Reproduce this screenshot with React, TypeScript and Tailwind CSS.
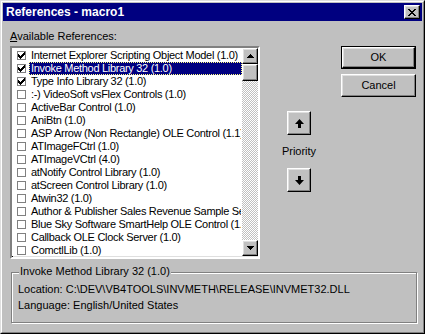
const items: { name: string; checked?: boolean; selected?: boolean }[] = [
  { name: "Internet Explorer Scripting Object Model (1.0)", checked: true },
  { name: "Invoke Method Library 32 (1.0)", checked: true, selected: true },
  { name: "Type Info Library 32 (1.0)", checked: true },
  { name: ":-) VideoSoft vsFlex Controls (1.0)" },
  { name: "ActiveBar Control (1.0)" },
  { name: "AniBtn (1.0)" },
  { name: "ASP Arrow (Non Rectangle) OLE Control (1.1)" },
  { name: "ATImageFCtrl (1.0)" },
  { name: "ATImageVCtrl (4.0)" },
  { name: "atNotify Control Library (1.0)" },
  { name: "atScreen Control Library (1.0)" },
  { name: "Atwin32 (1.0)" },
  { name: "Author & Publisher Sales Revenue Sample Server (1.0)" },
  { name: "Blue Sky Software SmartHelp OLE Control (1.0)" },
  { name: "Callback OLE Clock Server (1.0)" },
  { name: "ComctlLib (1.0)" },
];

const raised =
  "border border-t-white border-l-white border-r-black border-b-black shadow-[inset_-1px_-1px_0_#808080,inset_1px_1px_0_#dfdfdf]";

function CheckBox({ checked }: { checked?: boolean }) {
  return (
    <div className="ml-[4px] w-[9px] h-[9px] shrink-0 border border-[#808080] bg-white flex items-center justify-center">
      {checked && (
        <svg width="7" height="7" viewBox="0 0 7 7" shapeRendering="crispEdges">
          <path
            d="M6 0h1v1H6zM5 1h2v1H5zM0 2h1v1H0zM4 2h3v1H4zM0 3h2v1H0zM3 3h3v1H3zM0 4h5v1H0zM1 5h3v1H1zM2 6h1v1H2z"
            fill="#000"
          />
        </svg>
      )}
    </div>
  );
}

function ScrollArrow({ down }: { down?: boolean }) {
  return (
    <div className={`w-[16px] h-[16px] bg-[#c0c0c0] flex items-center justify-center ${raised}`}>
      <svg width="7" height="4" viewBox="0 0 7 4" shapeRendering="crispEdges">
        <path
          d={down ? "M0 0h7v1H0zM1 1h5v1H1zM2 2h3v1H2zM3 3h1v1H3z" : "M3 0h1v1H3zM2 1h3v1H2zM1 2h5v1H1zM0 3h7v1H0z"}
          fill="#000"
        />
      </svg>
    </div>
  );
}

function PriorityButton({ down }: { down?: boolean }) {
  return (
    <div className={`w-[24px] h-[24px] bg-[#c0c0c0] flex items-center justify-center ${raised}`}>
      <svg width="9" height="9" viewBox="0 0 9 9">
        <polygon
          points={down ? "4.5,9 0,4 3,4 3,0 6,0 6,4 9,4" : "4.5,0 9,5 6,5 6,9 3,9 3,5 0,5"}
          fill="#000"
        />
      </svg>
    </div>
  );
}

export default function App() {
  return (
    <div className="w-[425px] h-[334px] bg-[#c0c0c0] border border-t-[#dfdfdf] border-l-[#dfdfdf] border-r-black border-b-black font-['Liberation_Sans',Arial,sans-serif] text-[11px] text-black">
      <div className="h-full border border-t-white border-l-white border-r-[#808080] border-b-[#808080] p-[1px]">
        {/* title bar */}
        <div className="h-[18px] bg-[#000080] flex items-center justify-between pl-[3px] pr-[2px]">
          <span className="text-white font-bold text-[12px] leading-none">References - macro1</span>
          <div className={`w-[16px] h-[14px] bg-[#c0c0c0] flex items-center justify-center ${raised}`}>
            <svg width="8" height="7" viewBox="0 0 8 7" shapeRendering="crispEdges">
              <path
                d="M0 0h2v1H0zM6 0h2v1H6zM1 1h2v1H1zM5 1h2v1H5zM2 2h4v1H2zM3 3h2v1H3zM2 4h4v1H2zM1 5h2v1H1zM5 5h2v1H5zM0 6h2v1H0zM6 6h2v1H6z"
                fill="#000"
              />
            </svg>
          </div>
        </div>

        <div className="flex items-start pl-[7px]">
          {/* list column */}
          <div className="w-[250px]">
            <div className="mt-[9px] h-[13px] leading-[13px]">
              <span className="underline">A</span>vailable References:
            </div>
            <div className="mt-[3px] h-[213px] flex border-2 border-t-[#808080] border-l-[#808080] border-r-white border-b-white shadow-[inset_1px_1px_0_#000,inset_-1px_-1px_0_#dfdfdf] p-[1px]">
              <div className="flex-1 bg-white overflow-hidden -mt-[1px] -ml-[1px] pt-[1px] pl-[1px]">
                {items.map((it) => (
                  <div key={it.name} className="h-[13px] flex items-center">
                    <CheckBox checked={it.checked} />
                    <div
                      className={`ml-[3px] flex-1 h-[13px] leading-[11px] whitespace-nowrap overflow-hidden tracking-[-0.3px] pl-[1px] border border-dotted ${
                        it.selected ? "bg-[#000080] text-white border-[#ffff80]" : "border-transparent"
                      }`}
                    >
                      {it.name}
                    </div>
                  </div>
                ))}
              </div>
              <div className="w-[16px] -mt-[1px] -mr-[1px] flex flex-col bg-[repeating-conic-gradient(#c0c0c0_0_25%,#ffffff_0_50%)] bg-[length:2px_2px]">
                <ScrollArrow />
                <div className={`w-[16px] h-[17px] bg-[#c0c0c0] ${raised}`} />
                <div className="flex-1" />
                <ScrollArrow down />
              </div>
            </div>
          </div>

          {/* priority column */}
          <div className="ml-[19px] w-[40px] flex flex-col items-center">
            <div className="mt-[90px]">
              <PriorityButton />
            </div>
            <div className="mt-[10px] h-[13px] leading-[13px]">Priority</div>
            <div className="mt-[10px]">
              <PriorityButton down />
            </div>
          </div>

          {/* buttons column */}
          <div className="ml-[22px] w-[75px] flex flex-col">
            <div className="mt-[25px] h-[23px] border border-black">
              <div className={`h-full flex items-center justify-center bg-[#c0c0c0] ${raised}`}>OK</div>
            </div>
            <div className={`mt-[5px] h-[23px] flex items-center justify-center bg-[#c0c0c0] ${raised}`}>Cancel</div>
          </div>
        </div>

        {/* group box */}
        <div className="relative ml-[8px] mt-[13px] w-[406px] h-[51px] border border-[#808080] shadow-[inset_1px_1px_0_#fff,1px_1px_0_#fff] pl-[6px] pt-[8px]">
          <div className="absolute left-[7px] -top-[8px] px-[1px] bg-[#c0c0c0] leading-[13px]">
            Invoke Method Library 32 (1.0)
          </div>
          <div className="h-[16px] leading-[16px] whitespace-nowrap">
            Location: C:\DEV\VB4TOOLS\INVMETH\RELEASE\INVMET32.DLL
          </div>
          <div className="h-[16px] leading-[16px] whitespace-nowrap">Language: English/United States</div>
        </div>
      </div>
    </div>
  );
}
